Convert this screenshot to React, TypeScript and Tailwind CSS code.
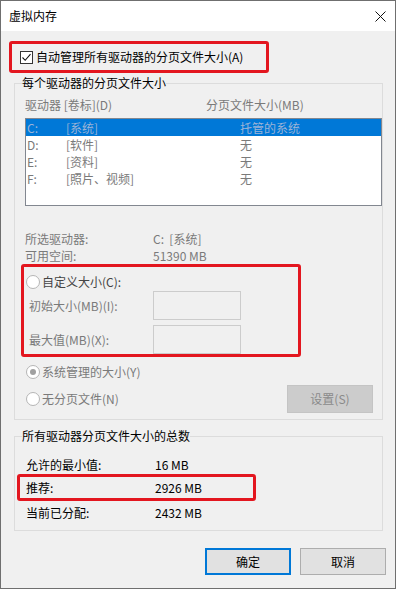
import React from 'react';

const font = { fontFamily: '"Noto Sans CJK SC", "Noto Sans", sans-serif' };

const drives = [
  { letter: 'C:', label: '[系统]', size: '托管的系统', selected: true },
  { letter: 'D:', label: '[软件]', size: '无', selected: false },
  { letter: 'E:', label: '[资料]', size: '无', selected: false },
  { letter: 'F:', label: '[照片、视频]', size: '无', selected: false },
];

const Radio: React.FC<{ checked?: boolean }> = ({ checked }) => (
  <span className="w-[14px] h-[14px] rounded-full border border-[#b5b5b5] bg-white flex items-center justify-center shrink-0">
    {checked && <span className="w-[6px] h-[6px] rounded-full bg-[#a0a0a0]" />}
  </span>
);

export default function App() {
  return (
    <div
      className="w-[396px] h-[589px] border border-[#6f6f6f] flex flex-col text-[12px] text-black overflow-hidden"
      style={font}
    >
      {/* Title bar */}
      <div className="h-[30px] bg-white flex items-center justify-between pl-[8px] pr-[9px]">
        <span className="leading-[16px]">虚拟内存</span>
        <svg width="11" height="11" viewBox="0 0 11 11">
          <path d="M0.5 0.5 L10.5 10.5 M10.5 0.5 L0.5 10.5" stroke="#111" strokeWidth="1" />
        </svg>
      </div>

      {/* Body */}
      <div className="flex-1 bg-[#f0f0f0] flex flex-col">
        <div className="mt-[10px] ml-[8px] w-[260px] h-[32px] border-[3px] border-[#e3161f] rounded-[3px] flex items-center pl-[8px] gap-[3px]">
          <span className="w-[13px] h-[13px] border border-[#333] bg-white flex items-center justify-center">
            <svg width="11" height="11" viewBox="0 0 11 11">
              <path d="M1.5 5.5 L4.2 8.3 L9.5 2.2" stroke="#111" strokeWidth="1.1" fill="none" />
            </svg>
          </span>
          <span className="leading-[16px]">自动管理所有驱动器的分页文件大小(A)</span>
        </div>

        {/* Group 1 */}
        <div className="mt-[10px] ml-[13px] w-[369px] h-[337px] border border-[#dcdcdc] flex flex-col">
          <div className="-mt-[9px] ml-[7px] w-fit bg-[#f0f0f0] leading-[16px]">每个驱动器的分页文件大小</div>
          <div className="mt-[6px] pl-[10px] flex leading-[16px] text-[#7a7a7a]">
            <span className="w-[181px]">驱动器 [卷标](D)</span>
            <span>分页文件大小(MB)</span>
          </div>
          <div className="mt-[5px] ml-[10px] w-[357px] h-[88px] border border-[#828790] bg-white flex flex-col">
            {drives.map((d) => (
              <div
                key={d.letter}
                className={`h-[17px] flex items-center leading-[17px] pl-[1px] ${
                  d.selected ? 'bg-[#0078d7] text-[#9cb3d6]' : 'text-[#7a7a7a]'
                }`}
              >
                <span className="w-[39px]">{d.letter}</span>
                <span className="w-[174px]">{d.label}</span>
                <span>{d.size}</span>
              </div>
            ))}
          </div>

          <div className="mt-[24px] pl-[10px] flex h-[17px] leading-[17px] text-[#7a7a7a]">
            <span className="w-[128px]">所选驱动器:</span>
            <span>C:&nbsp;&nbsp;[系统]</span>
          </div>
          <div className="pl-[10px] flex h-[17px] leading-[17px] text-[#7a7a7a]">
            <span className="w-[128px]">可用空间:</span>
            <span>51390 MB</span>
          </div>

          <div className="ml-[6px] w-[280px] h-[93px] border-[3px] border-[#e3161f] rounded-[3px] flex flex-col overflow-hidden">
            <div className="mt-[7px] pl-[2px] flex items-center gap-[2px] h-[16px]">
              <Radio />
              <span className="leading-[16px] text-[#444]">自定义大小(C):</span>
            </div>
            <div className="mt-[1px] pl-[5px] flex items-center">
              <span className="w-[124px] leading-[16px] text-[#7a7a7a]">初始大小(MB)(I):</span>
              <span className="w-[88px] h-[29px] border border-[#cccccc] bg-[#f0f0f0]" />
            </div>
            <div className="mt-[5px] pl-[5px] flex items-center">
              <span className="w-[124px] leading-[16px] text-[#7a7a7a]">最大值(MB)(X):</span>
              <span className="w-[88px] h-[29px] border border-[#cccccc] bg-[#f0f0f0]" />
            </div>
          </div>

          <div className="mt-[7px] pl-[11px] flex items-center gap-[2px] h-[16px]">
            <Radio checked />
            <span className="leading-[16px] text-[#7a7a7a]">系统管理的大小(Y)</span>
          </div>
          <div className="mt-[5px] pl-[11px] pr-[9px] flex items-center justify-between">
            <div className="flex items-center gap-[2px]">
              <Radio />
              <span className="leading-[16px] text-[#7a7a7a]">无分页文件(N)</span>
            </div>
            <span className="w-[86px] h-[28px] bg-[#cccccc] border border-[#c4c4c4] flex items-center justify-center text-[#8a8a8a] leading-[16px]">
              设置(S)
            </span>
          </div>
        </div>

        {/* Group 2 */}
        <div className="mt-[16px] ml-[13px] w-[369px] h-[95px] border border-[#dcdcdc] flex flex-col">
          <div className="-mt-[9px] ml-[7px] w-fit bg-[#f0f0f0] leading-[16px]">所有驱动器分页文件大小的总数</div>
          <div className="mt-[12px] pl-[11px] flex h-[17px] leading-[17px]">
            <span className="w-[129px]">允许的最小值:</span>
            <span>16 MB</span>
          </div>
          <div className="mt-[1px] ml-[2px] w-[239px] h-[27px] border-[3px] border-[#e3161f] rounded-[3px] pl-[6px] flex items-center">
            <span className="w-[129px] leading-[17px]">推荐:</span>
            <span className="leading-[17px]">2926 MB</span>
          </div>
          <div className="mt-[3px] pl-[11px] flex h-[17px] leading-[17px]">
            <span className="w-[129px]">当前已分配:</span>
            <span>2432 MB</span>
          </div>
        </div>

        {/* Buttons */}
        <div className="mt-[17px] pr-[9px] flex justify-end gap-[9px]">
          <button className="w-[86px] h-[27px] bg-[#e1e1e1] border-2 border-[#0078d7] leading-[16px]">确定</button>
          <button className="w-[86px] h-[27px] bg-[#e1e1e1] border border-[#adadad] leading-[16px]">取消</button>
        </div>
      </div>
    </div>
  );
}
